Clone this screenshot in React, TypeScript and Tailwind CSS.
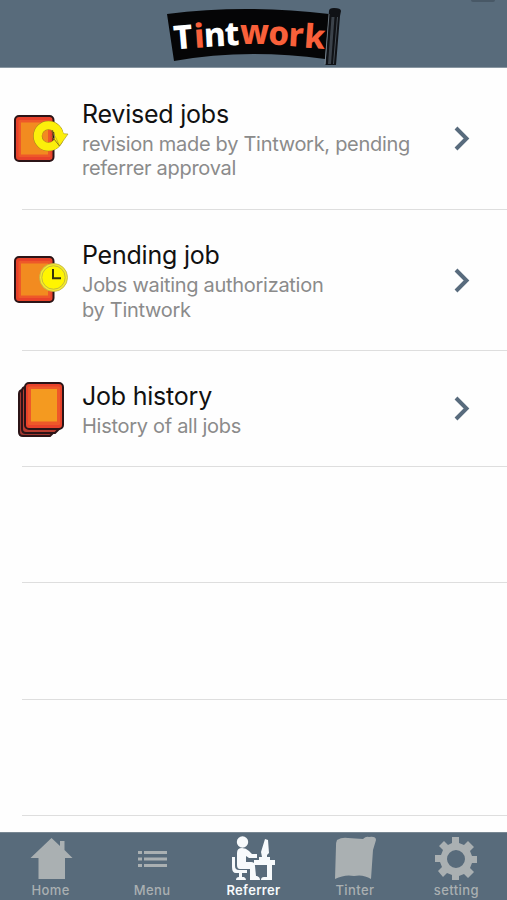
import type { ReactNode } from "react";

function Logo() {
  return (
    <svg width="174" height="60" viewBox="167 8 174 60" className="h-[60px] w-[174px]" aria-label="Tintwork">
      <path d="M167 15 Q245 5 329 15 L325 60 Q245 49 174 62 Z" fill="#050506" />
      <path d="M329 12 Q329 9 334 9 Q341 9 341 12 L340 17 L336 66 L325.500 66 Z" fill="#101216" />
      <path d="M333 18 L329.500 65" stroke="#3b424a" strokeWidth="3" />
      <path d="M329 15 L325 65" stroke="#87929b" strokeWidth=".7" />
      <path d="M337.500 18 L333.500 65" stroke="#454d55" strokeWidth="1" />
      <text
        x="174.5 195 204.500 225 240 268 288 303.500"
        y="50.500 49 48 46.500 45 45.500 47 48.500"
        rotate="-5 -4 -3 -2 0 2 3 4"
        fontFamily="Noto Sans, sans-serif"
        fontWeight="800"
        fontSize="33"
        fill="#fff"
      >
        T<tspan fill="#f9603a">i</tspan>nt<tspan fill="#f9603a">work</tspan>
      </text>
    </svg>
  );
}

function Card() {
  return (
    <>
      <rect x="15" y="6" width="38.500" height="45" rx="4" fill="#e8422b" stroke="#2b1417" strokeWidth="2" />
      <rect x="18.500" y="10" width="32" height="37" rx="1" fill="#ee5829" />
      <rect x="21" y="12.500" width="27" height="32" fill="#f28b20" />
    </>
  );
}

function RevisedIcon() {
  return (
    <svg width="72" height="58" viewBox="0 0 72 58">
      <Card />
      <circle cx="48.500" cy="26" r="10.800" fill="none" stroke="#9c861e" strokeWidth="9" />
      <circle cx="48.500" cy="26" r="10.800" fill="none" stroke="#fcef0b" strokeWidth="8" />
      <path d="M54 23 L68 24 L59.500 36 Z" fill="#fcef0b" stroke="#a59226" strokeWidth=".6" />
      <path d="M55 17 L61 19 L64 24.500 L60 31 L55 26 Z" fill="#fcef0b" />
      <path d="M53 20 L51.500 22 L54 24 L52 27 L54 29 L59.500 36" fill="none" stroke="#806c1b" strokeWidth=".9" />
    </svg>
  );
}

function PendingIcon() {
  return (
    <svg width="72" height="58" viewBox="0 0 72 58" className="relative -top-px">
      <Card />
      <circle cx="53.500" cy="26.500" r="14" fill="#f4eb30" stroke="#bfb047" strokeWidth=".8" />
      <circle cx="53.500" cy="26.500" r="11.700" fill="#fff500" stroke="#b8ad42" strokeWidth=".8" />
      <path d="M53 18 V27.300 H61" fill="none" stroke="#34330b" strokeWidth="2" />
    </svg>
  );
}

function HistoryIcon() {
  return (
    <svg width="72" height="58" viewBox="0 0 72 58">
      <path d="M19 14 Q19 10 23 10 H56 V50 L50 56 H23 Q19 56 19 52 Z" fill="#9f3730" stroke="#2b1417" strokeWidth="2" />
      <path d="M22 11 Q22 7 26 7 H60 V48 L55 53 H26 Q22 53 22 49 Z" fill="#b73c30" stroke="#2b1417" strokeWidth="2" />
      <rect x="25" y="3" width="38" height="46" rx="4" fill="#e8422b" stroke="#2b1417" strokeWidth="2" />
      <rect x="28" y="6.500" width="32" height="38.500" rx="1.500" fill="#ee5829" />
      <rect x="31" y="9" width="26" height="32.500" fill="#f49a20" />
    </svg>
  );
}

function Row({ icon, title, children, tall }: { icon: ReactNode; title: string; children: ReactNode; tall?: boolean }) {
  return (
    <div className={`relative flex w-full shrink-0 items-center ${tall ? "h-[141px]" : "h-[116px]"}`}>
      <div className="w-[82px] shrink-0">{icon}</div>
      <div className="min-w-0 grow">
        <div className="h-[33px] whitespace-nowrap text-[25px] leading-[33px] tracking-[-.22px] text-[#111]">{title}</div>
        <div className="whitespace-nowrap pt-px text-[20px] leading-[24.400px] tracking-[-.29px] text-[#8b8b8b]">{children}</div>
      </div>
      <svg width="18" height="28" viewBox="0 0 18 28" className="mr-[36px] shrink-0">
        <path d="M3 3 L13.500 13.500 L3 24" fill="none" stroke="#586b7d" strokeWidth="4" />
      </svg>
      <Divider />
    </div>
  );
}

function Divider() {
  return <div className="absolute bottom-0 left-[22px] right-0 h-px bg-[#dedede]" />;
}

function Tab({ label, active, children }: { label: string; active?: boolean; children: ReactNode }) {
  return (
    <div className={`flex min-w-0 flex-1 flex-col items-center ${active ? "text-[#f7fafc]" : "text-[#aab0b2]"}`}>
      <svg width="60" height="49" viewBox="0 0 60 49" fill="currentColor">{children}</svg>
      <span className={`h-4 whitespace-nowrap text-[13px] leading-4 ${active ? "font-semibold tracking-[.35px]" : "font-medium tracking-[.4px]"}`}>{label}</span>
    </div>
  );
}

export default function App() {
  return (
    <main className="flex h-[900px] w-[507px] flex-col overflow-hidden bg-[#fefefe] font-[Inter,sans-serif]">
      <header className="relative flex h-[68px] shrink-0 items-end justify-center border-b border-[#8997a2] bg-[#586b7b]">
        <Logo />
        <div className="absolute right-3 top-0 h-[2px] w-6 rounded-b bg-[#485866]" />
      </header>
      <section className="flex min-h-0 grow flex-col overflow-hidden">
        <div className="flex h-[142px] shrink-0 items-center"><Row tall icon={<RevisedIcon />} title="Revised jobs">revision made by Tintwork, pending<br />referrer approval</Row></div>
        <Row tall icon={<PendingIcon />} title="Pending job">Jobs waiting authorization<br />by Tintwork</Row>
        <Row icon={<HistoryIcon />} title="Job history">History of all jobs</Row>
        <div className="relative h-[116px] shrink-0"><Divider /></div>
        <div className="relative h-[117px] shrink-0"><Divider /></div>
        <div className="relative h-[116px] shrink-0"><Divider /></div>
      </section>
      <nav className="flex h-[68px] shrink-0 border-t border-[#788793] bg-[#586b7b]">
        <Tab label="Home">
          <path d="M9.500 25 L30.500 5 L39 13 V8 H43.500 V17 L51.500 25 H44 V46 H17.500 V25 Z" />
        </Tab>
        <Tab label="Menu">
          <path d="M16 18h4v3h-4zM22 18h23v3H22zM16 24.500h4v3h-4zM22 24.500h23v3H22zM16 31h4v3h-4zM22 31h23v3H22z" />
        </Tab>
        <Tab label="Referrer" active>
          <circle cx="18.500" cy="9" r="5.700" />
          <path d="M13 20 Q13 15 18 15 Q22 15 25 18 L28 21 H33 V25 H25 L22 23 V29 H27 Q31 29 31 33 L32 43 H33 Q36 44 36 47 H26 V36 H16 Q13 36 13 32 Z" />
          <path d="M8 24 H11 V33 Q11 37 15 37 H23 V40 H18 V44 H20 Q22 45 22 47 H12 Q12 44 15 44 V40 H12 Q8 40 8 34 Z" />
          <path d="M30 27 H51 V32 H48 V47 H37 Q37 44 40 44 H43 V32 H30 Z" />
          <path d="M41 6 L44 7 L45 20 L43 22 V24 H46 V27 H35 V24 H38 L37 19 Z" />
        </Tab>
        <Tab label="Tinter">
          <path d="M12 7 Q17 4 23 5 L38 6 Q41 3 44 4 Q51 3 51 7 L48 17 L46 46 Q38 41 29 43 Q20 41 10 46 L11 13 Q11 9 12 7 Z" />
        </Tab>
        <Tab label="setting">
          <path fillRule="evenodd" d="M26 4h7v6l5 2 4-4 6 6-4 4 2 5h5v7h-5l-2 5 4 4-6 6-4-4-5 2v4h-7v-5l-5-2-4 4-5-6 4-4-2-5H9v-7h6l2-5-4-4 5-5 4 4 4-2zM30 17a9 9 0 1 0 0 18 9 9 0 1 0 0-18" />
        </Tab>
      </nav>
    </main>
  );
}
